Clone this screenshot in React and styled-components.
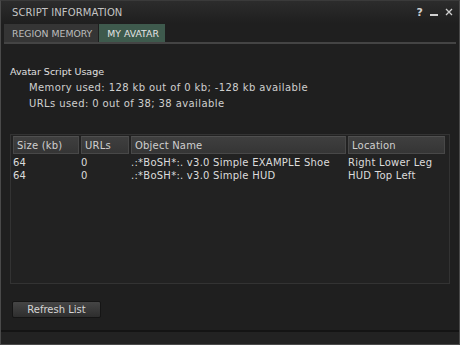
import React from "react";
import styled, { createGlobalStyle } from "styled-components";

const Global = createGlobalStyle`
  html, body { margin: 0; padding: 0; background: #1e1e1e; }
  body { font-family: "DejaVu Sans", sans-serif; }
`;

const Window = styled.div`
  box-sizing: border-box;
  width: 460px;
  height: 345px;
  display: flex;
  flex-direction: column;
  background: #1f1f1f;
  border: 1px solid #4a4a4a;
  border-top-color: #3a3a3a;
  color: #d8d8d8;
  font-size: 10px;
`;

const TitleBar = styled.div`
  height: 22px;
  display: flex;
  align-items: center;
  padding: 0 6px 0 11px;
  background: linear-gradient(#2c2c2c, #1f1f1f);
`;

const Title = styled.div`
  flex: 1;
  font-size: 10px;
  color: #c4c4c4;
  letter-spacing: 0.1px;
  padding-top: 1px;
`;

const Controls = styled.div`
  display: flex;
  gap: 7px;
  align-items: center;
  color: #d0d0d0;
`;

const Help = styled.span`
  font-weight: bold;
  font-size: 11px;
`;

const TabBar = styled.div`
  margin: 1px 3px 0 3px;
  display: flex;
  border-bottom: 2px solid #444;
`;

const Tab = styled.div`
  height: 18px;
  display: flex;
  align-items: center;
  padding: 0 6px 0 8px;
  margin-right: 1px;
  font-size: 9.3px;
  color: ${(p) => (p.$active ? "#e4e4e4" : "#bdbdbd")};
  background: ${(p) => (p.$active ? "#3e5a4d" : "#353535")};
`;

const Body = styled.div`
  flex: 1;
  display: flex;
  flex-direction: column;
  padding: 22px 9px 0 9px;
`;

const Heading = styled.div`
  color: #e0e0e0;
  height: 16px;
  font-size: 9.5px;
`;

const Info = styled.div`
  padding-left: 19px;
  height: 16px;
  color: #cfcfcf;
  letter-spacing: 0.4px;
`;

const Table = styled.div`
  margin-top: 20px;
  height: 146px;
  border: 1px solid #333;
  background: #222;
  padding: 1px 2px;
  display: flex;
  flex-direction: column;
`;

const Grid = styled.div`
  display: grid;
  grid-template-columns: 68px 50px 217px 1fr;
`;

const HeadCell = styled.div`
  height: 18px;
  display: flex;
  align-items: center;
  padding-left: 3px;
  margin-right: 2px;
  margin-bottom: 2px;
  background: linear-gradient(#3f3f3f, #353535);
  border: 1px solid #484848;
  border-top-color: #505050;
  color: #cfcfcf;
  box-sizing: border-box;
  letter-spacing: 0.2px;
`;

const Cell = styled.div`
  height: 13px;
  line-height: 13px;
  color: #dcdcdc;
  white-space: nowrap;
  letter-spacing: 0.25px;
`;

const ButtonRow = styled.div`
  margin-top: 17px;
`;

const Button = styled.button`
  width: 89px;
  height: 17px;
  border: 1px solid #151515;
  border-radius: 2px;
  background: linear-gradient(#454545, #2e2e2e);
  color: #d6d6d6;
  font-family: "DejaVu Sans", sans-serif;
  font-size: 10px;
  padding: 0;
  margin-left: 2px;
`;

const StatusBar = styled.div`
  height: 12px;
  border-top: 2px solid #141414;
  background: #222;
`;

const rows = [
  ["64", "0", ".:*BoSH*:. v3.0 Simple EXAMPLE Shoe", "Right Lower Leg"],
  ["64", "0", ".:*BoSH*:. v3.0 Simple HUD", "HUD Top Left"],
];

export default function App() {
  return (
    <>
      <Global />
      <Window>
        <TitleBar>
          <Title>SCRIPT INFORMATION</Title>
          <Controls>
            <Help>?</Help>
            <svg width="8" height="8" viewBox="0 0 8 8">
              <rect x="0" y="6" width="8" height="2" fill="#d0d0d0" />
            </svg>
            <svg width="8" height="8" viewBox="0 0 8 8">
              <path d="M1 1L7 7M7 1L1 7" stroke="#cfcfcf" strokeWidth="1.3" />
            </svg>
          </Controls>
        </TitleBar>
        <TabBar>
          <Tab>REGION MEMORY</Tab>
          <Tab $active>MY AVATAR</Tab>
        </TabBar>
        <Body>
          <Heading>Avatar Script Usage</Heading>
          <Info>Memory used: 128 kb out of 0 kb; -128 kb available</Info>
          <Info>URLs used: 0 out of 38; 38 available</Info>
          <Table>
            <Grid>
              <HeadCell>Size (kb)</HeadCell>
              <HeadCell>URLs</HeadCell>
              <HeadCell>Object Name</HeadCell>
              <HeadCell>Location</HeadCell>
              {rows.map((r, i) =>
                r.map((c, j) => <Cell key={i + "-" + j}>{c}</Cell>)
              )}
            </Grid>
          </Table>
          <ButtonRow>
            <Button>Refresh List</Button>
          </ButtonRow>
        </Body>
        <StatusBar />
      </Window>
    </>
  );
}
